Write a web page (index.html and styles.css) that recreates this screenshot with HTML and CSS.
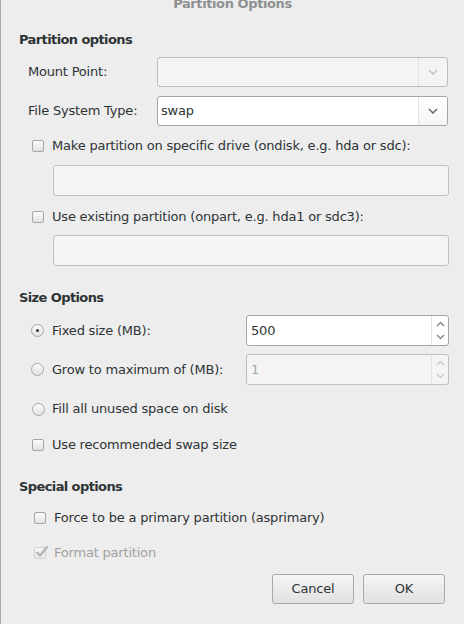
FILE: index.html
```html
<!DOCTYPE html>
<html>
<head>
<meta charset="utf-8">
<link rel="stylesheet" href="styles.css">
</head>
<body>
<div class="dialog">
  <div class="title">Partition Options</div>

  <div class="heading h-part">Partition options</div>
  <div class="form-grid">
    <div class="label">Mount Point:</div>
    <div class="combo disabled">
      <div class="combo-text"></div>
      <div class="combo-btn"><svg width="10" height="6" viewBox="0 0 10 6"><path d="M1 1 L5 5 L9 1" fill="none" stroke="#c4c4c4" stroke-width="1.6"/></svg></div>
    </div>
    <div class="label">File System Type:</div>
    <div class="combo">
      <div class="combo-text">swap</div>
      <div class="combo-btn"><svg width="10" height="6" viewBox="0 0 10 6"><path d="M1 1 L5 5 L9 1" fill="none" stroke="#6e6e6e" stroke-width="1.6"/></svg></div>
    </div>
  </div>

  <div class="check-row cr-1"><span class="checkbox"></span><span>Make partition on specific drive (ondisk, e.g. hda or sdc):</span></div>
  <div class="entry e-1"></div>
  <div class="check-row cr-2"><span class="checkbox"></span><span>Use existing partition (onpart, e.g. hda1 or sdc3):</span></div>
  <div class="entry e-2"></div>

  <div class="heading h-size">Size Options</div>
  <div class="size-row sr-1">
    <div class="opt"><span class="radio checked"></span><span>Fixed size (MB):</span></div>
    <div class="spin">
      <div class="spin-text">500</div>
      <div class="spin-btns">
        <svg width="9" height="6" viewBox="0 0 9 6"><path d="M1 5 L4.5 1.5 L8 5" fill="none" stroke="#8a8a8a" stroke-width="1.5"/></svg>
        <svg width="9" height="6" viewBox="0 0 9 6"><path d="M1 1 L4.5 4.5 L8 1" fill="none" stroke="#8a8a8a" stroke-width="1.5"/></svg>
      </div>
    </div>
  </div>
  <div class="size-row sr-2">
    <div class="opt"><span class="radio"></span><span>Grow to maximum of (MB):</span></div>
    <div class="spin disabled">
      <div class="spin-text">1</div>
      <div class="spin-btns">
        <svg width="9" height="6" viewBox="0 0 9 6"><path d="M1 5 L4.5 1.5 L8 5" fill="none" stroke="#cdcdcd" stroke-width="1.5"/></svg>
        <svg width="9" height="6" viewBox="0 0 9 6"><path d="M1 1 L4.5 4.5 L8 1" fill="none" stroke="#cdcdcd" stroke-width="1.5"/></svg>
      </div>
    </div>
  </div>
  <div class="opt-row or-fill"><span class="radio"></span><span>Fill all unused space on disk</span></div>
  <div class="opt-row or-swap"><span class="checkbox"></span><span>Use recommended swap size</span></div>

  <div class="heading h-special">Special options</div>
  <div class="check-row sp-1"><span class="checkbox"></span><span>Force to be a primary partition (asprimary)</span></div>
  <div class="check-row sp-2 dim"><span class="checkbox faint"><svg class="tick" width="14" height="13" viewBox="0 0 14 13"><path d="M1.5 7 L5 10.5 L12.5 1.5" fill="none" stroke="#b4b4b4" stroke-width="2.4"/></svg></span><span>Format partition</span></div>

  <div class="buttons">
    <div class="btn">Cancel</div>
    <div class="btn">OK</div>
  </div>
</div>
</body>
</html>
```

FILE: styles.css
```css
html, body {
  margin: 0;
  padding: 0;
}
body {
  background: #ededed;
  font-family: "DejaVu Sans", sans-serif;
  font-size: 13px;
  letter-spacing: -0.2px;
  color: #2e3436;
  width: 464px;
  height: 624px;
  overflow: hidden;
}
.dialog {
  box-sizing: border-box;
  width: 464px;
  height: 624px;
  border-left: 1px solid #a9a9a9;
  padding-left: 18px;
  overflow: hidden;
}
.title {
  margin-top: -3px;
  height: 14px;
  line-height: 14px;
  text-align: center;
  font-weight: bold;
  color: #8e9091;
  padding-right: 18px;
  letter-spacing: -0.4px;
}
.heading {
  font-weight: bold;
  height: 16px;
  line-height: 16px;
  letter-spacing: -0.6px;
}
.h-part { margin-top: 21px; }
.h-size { margin-top: 24px; }
.h-special { margin-top: 24px; }

.form-grid {
  display: grid;
  grid-template-columns: 129px 291px;
  row-gap: 9px;
  margin-top: 9px;
  margin-left: 9px;
  align-items: center;
}
.label { line-height: 16px; }
.combo {
  display: flex;
  height: 30px;
  box-sizing: border-box;
  border: 1px solid #a5a5a5;
  border-radius: 3px;
  background: #ffffff;
}
.combo.disabled {
  background: #f4f4f4;
  border-color: #bdbdbd;
}
.combo-text {
  flex: 1;
  padding-left: 3px;
  line-height: 28px;
}
.combo-btn {
  width: 28px;
  border-left: 1px solid #e2e2e2;
  display: flex;
  align-items: center;
  justify-content: center;
  background: linear-gradient(#ffffff, #f6f6f6);
  border-radius: 0 3px 3px 0;
}
.combo.disabled .combo-btn { background: #f4f4f4; }

.check-row, .opt-row {
  display: flex;
  align-items: center;
  height: 20px;
  line-height: 20px;
  margin-left: 13px;
}
.check-row .checkbox, .opt-row .checkbox { margin-right: 8px; }
.opt-row .radio { margin-right: 7px; }
.cr-1 { margin-top: 10px; }
.cr-2 { margin-top: 11px; }

.checkbox {
  display: inline-block;
  box-sizing: border-box;
  width: 12px;
  height: 12px;
  border: 1px solid #a6a6a6;
  border-radius: 2px;
  background: linear-gradient(#fbfbfb, #e2e2e2);
  flex: none;
  position: relative;
}
.checkbox.faint {
  border-color: #d2d2d2;
  background: linear-gradient(#f6f6f6, #ececec);
}
.tick {
  position: absolute;
  left: 0;
  top: -3px;
}
.radio {
  display: inline-block;
  box-sizing: border-box;
  width: 13px;
  height: 13px;
  border: 1px solid #a6a6a6;
  border-radius: 50%;
  background: linear-gradient(#fbfbfb, #e2e2e2);
  flex: none;
  position: relative;
}
.radio.checked::after {
  content: "";
  position: absolute;
  left: 4px;
  top: 4px;
  width: 3px;
  height: 3px;
  border-radius: 50%;
  background: #2e3436;
}

.entry {
  box-sizing: border-box;
  margin-left: 34px;
  width: 396px;
  height: 31px;
  border: 1px solid #c0c0c0;
  border-radius: 3px;
  background: #f4f4f4;
}
.e-1 { margin-top: 9px; }
.e-2 { margin-top: 8px; }

.size-row {
  display: flex;
  align-items: center;
  justify-content: space-between;
  height: 31px;
  margin-left: 12px;
  width: 418px;
}
.sr-1 { margin-top: 9px; }
.sr-2 { margin-top: 8px; }
.opt {
  display: flex;
  align-items: center;
  line-height: 20px;
}
.opt .radio { margin-right: 8px; }
.spin {
  display: flex;
  box-sizing: border-box;
  width: 203px;
  height: 31px;
  border: 1px solid #a5a5a5;
  border-radius: 3px;
  background: #ffffff;
}
.spin.disabled {
  background: #f4f4f4;
  border-color: #c0c0c0;
  color: #a6a6a6;
}
.spin-text {
  flex: 1;
  padding-left: 4px;
  line-height: 29px;
}
.spin-btns {
  width: 16px;
  border-left: 1px solid #e2e2e2;
  display: flex;
  flex-direction: column;
  align-items: center;
  justify-content: space-around;
  padding: 2px 0;
}

.or-fill { margin-top: 14px; }
.or-swap { margin-top: 16px; }

.sp-1 { margin-top: 13px; margin-left: 15px; }
.sp-2 { margin-top: 15px; margin-left: 15px; }
.sp-1 .checkbox { margin-right: 8px; }
.dim { color: #a0a0a0; }

.buttons {
  display: flex;
  justify-content: flex-end;
  gap: 9px;
  margin-top: 11px;
  padding-right: 19px;
}
.btn {
  box-sizing: border-box;
  width: 82px;
  height: 30px;
  line-height: 28px;
  text-align: center;
  border: 1px solid #a9a9a9;
  border-radius: 3px;
  background: linear-gradient(#f5f5f5, #e1e1e1);
  color: #2e3436;
}
```
